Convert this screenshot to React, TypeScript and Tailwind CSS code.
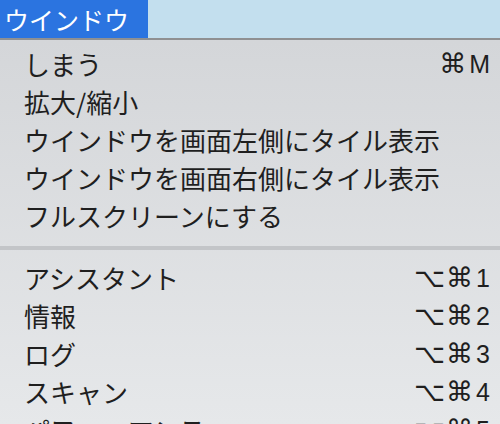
const jp = { fontFamily: '"Noto Sans CJK JP", "DejaVu Sans", sans-serif' };
const keys = { fontFamily: '"Liberation Sans", "DejaVu Sans", sans-serif' };

const top = [
  { label: "しまう", key: "⌘M" },
  { label: "拡大/縮小" },
  { label: "ウインドウを画面左側にタイル表示" },
  { label: "ウインドウを画面右側にタイル表示" },
  { label: "フルスクリーンにする" },
];

const bottom = [
  { label: "アシスタント", key: "⌥⌘1" },
  { label: "情報", key: "⌥⌘2" },
  { label: "ログ", key: "⌥⌘3" },
  { label: "スキャン", key: "⌥⌘4" },
  { label: "パフォーマンス", key: "⌥⌘5" },
];

const Shortcut = ({ value }: { value: string }) => {
  const mods = value.slice(0, -1);
  const last = value.slice(-1);
  return (
    <span className="flex items-center gap-[2px]" style={keys}>
      <span className="text-[27px] tracking-[1px] font-medium">{mods}</span>
      <span className="text-[25px]">{last}</span>
    </span>
  );
};

const Row = ({ label, shortcut }: { label: string; shortcut?: string }) => (
  <div className="h-[38px] flex items-center justify-between pl-[24px] pr-[10px] text-[26px] leading-none text-[#1f1f1f]">
    <span>{label}</span>
    {shortcut && <Shortcut value={shortcut} />}
  </div>
);

export default function App() {
  return (
    <div className="w-[500px] h-[424px] overflow-hidden" style={jp}>
      <div className="h-[38px] flex bg-[#c3dfee]">
        <div className="w-[148px] bg-[#2b74e0] text-white text-[25px] leading-none flex items-center pl-[4px]">
          ウインドウ
        </div>
      </div>
      <div className="h-[2px] bg-[#8f9092]" />
      <div className="h-[384px] bg-gradient-to-b from-[#d4d6d9] to-[#e6e8ea]">
        <div className="pt-[5px]">
          {top.map((r) => (
            <Row key={r.label} label={r.label} shortcut={r.key} />
          ))}
        </div>
        <div className="mt-[11px] h-[4px] bg-[#c3c5c8]" />
        <div className="pt-[9px]">
          {bottom.map((r) => (
            <Row key={r.label} label={r.label} shortcut={r.key} />
          ))}
        </div>
      </div>
    </div>
  );
}
